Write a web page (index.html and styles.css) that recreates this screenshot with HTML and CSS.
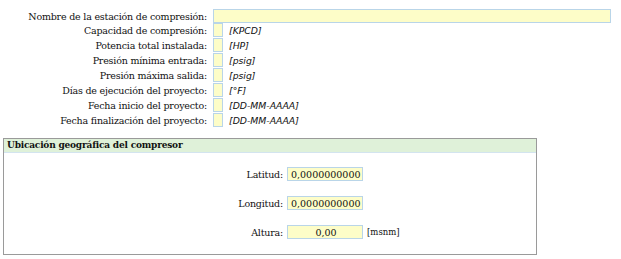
FILE: index.html
```html
<!DOCTYPE html>
<html lang="es">

<head>
    <meta charset="UTF-8">
    <title>Estación de compresión</title>
    <link rel="stylesheet" href="styles.css">
</head>

<body>
    <form class="datos">
        <div class="fila fila-nombre">
            <label class="etiqueta" for="nombre">Nombre de la estación de compresión:</label>
            <input class="campo campo-largo" type="text" id="nombre">
        </div>

        <div class="filas">
            <label class="etiqueta" for="capacidad">Capacidad de compresión:</label>
            <input class="campo campo-corto" type="text" id="capacidad">
            <span class="unidad">[KPCD]</span>

            <label class="etiqueta" for="potencia">Potencia total instalada:</label>
            <input class="campo campo-corto" type="text" id="potencia">
            <span class="unidad">[HP]</span>

            <label class="etiqueta" for="pmin">Presión mínima entrada:</label>
            <input class="campo campo-corto" type="text" id="pmin">
            <span class="unidad">[psig]</span>

            <label class="etiqueta" for="pmax">Presión máxima salida:</label>
            <input class="campo campo-corto" type="text" id="pmax">
            <span class="unidad">[psig]</span>

            <label class="etiqueta" for="dias">Días de ejecución del proyecto:</label>
            <input class="campo campo-corto" type="text" id="dias">
            <span class="unidad">[°F]</span>

            <label class="etiqueta" for="inicio">Fecha inicio del proyecto:</label>
            <input class="campo campo-corto" type="text" id="inicio">
            <span class="unidad">[DD-MM-AAAA]</span>

            <label class="etiqueta" for="fin">Fecha finalización del proyecto:</label>
            <input class="campo campo-corto" type="text" id="fin">
            <span class="unidad">[DD-MM-AAAA]</span>
        </div>

        <div class="panel">
            <div class="panel-titulo">Ubicación geográfica del compresor</div>
            <div class="panel-cuerpo">
                <label class="etiqueta" for="latitud">Latitud:</label>
                <input class="campo campo-coord" type="text" id="latitud" value="0,0000000000">
                <span></span>

                <label class="etiqueta" for="longitud">Longitud:</label>
                <input class="campo campo-coord" type="text" id="longitud" value="0,0000000000">
                <span></span>

                <label class="etiqueta" for="altura">Altura:</label>
                <input class="campo campo-coord centrado" type="text" id="altura" value="0,00">
                <span class="unidad-recta">[msnm]</span>
            </div>
        </div>
    </form>
</body>

</html>
```

FILE: styles.css
```css
body {
    margin: 0;
    font: 10px "DejaVu Serif", serif;
    color: #111;
    background: #fff;
}

.datos {
    padding-top: 9px;
}

.fila {
    display: flex;
    align-items: center;
}

.etiqueta {
    font: 9.5px "DejaVu Serif", serif;
    letter-spacing: -0.2px;
    text-align: right;
    white-space: nowrap;
}

.fila-nombre .etiqueta {
    width: 207px;
    margin-right: 6px;
}

.campo {
    box-sizing: border-box;
    height: 14px;
    margin: 0;
    padding: 0 2px;
    border: 1px solid #b9d5e8;
    background: #fdfdc8;
    font: 9.5px "DejaVu Serif", serif;
    color: #111;
}

.campo-largo {
    width: 398px;
}

.filas {
    display: grid;
    grid-template-columns: 207px 10px auto;
    column-gap: 6px;
    row-gap: 1px;
    align-items: center;
}

.campo-corto {
    width: 10px;
}

.unidad {
    font: italic 9.3px "DejaVu Sans", sans-serif;
}

.panel {
    width: 534px;
    height: 117px;
    box-sizing: border-box;
    margin: 11px 0 0 3px;
    border: 1px solid #9a9a9a;
}

.panel-titulo {
    height: 13px;
    padding: 0 3px;
    background: #dff1d9;
    border-bottom: 1px solid #d3e4ef;
    font: bold 9px/13px "DejaVu Serif", serif;
    letter-spacing: -0.2px;
}

.panel-cuerpo {
    display: grid;
    grid-template-columns: 279px 76px auto;
    column-gap: 4px;
    row-gap: 15px;
    align-items: center;
    padding-top: 14px;
}

.campo-coord {
    width: 76px;
    padding: 0 1px 0 3px;
}

.centrado {
    text-align: center;
}

.unidad-recta {
    font: 8.5px "DejaVu Serif", serif;
}
```
